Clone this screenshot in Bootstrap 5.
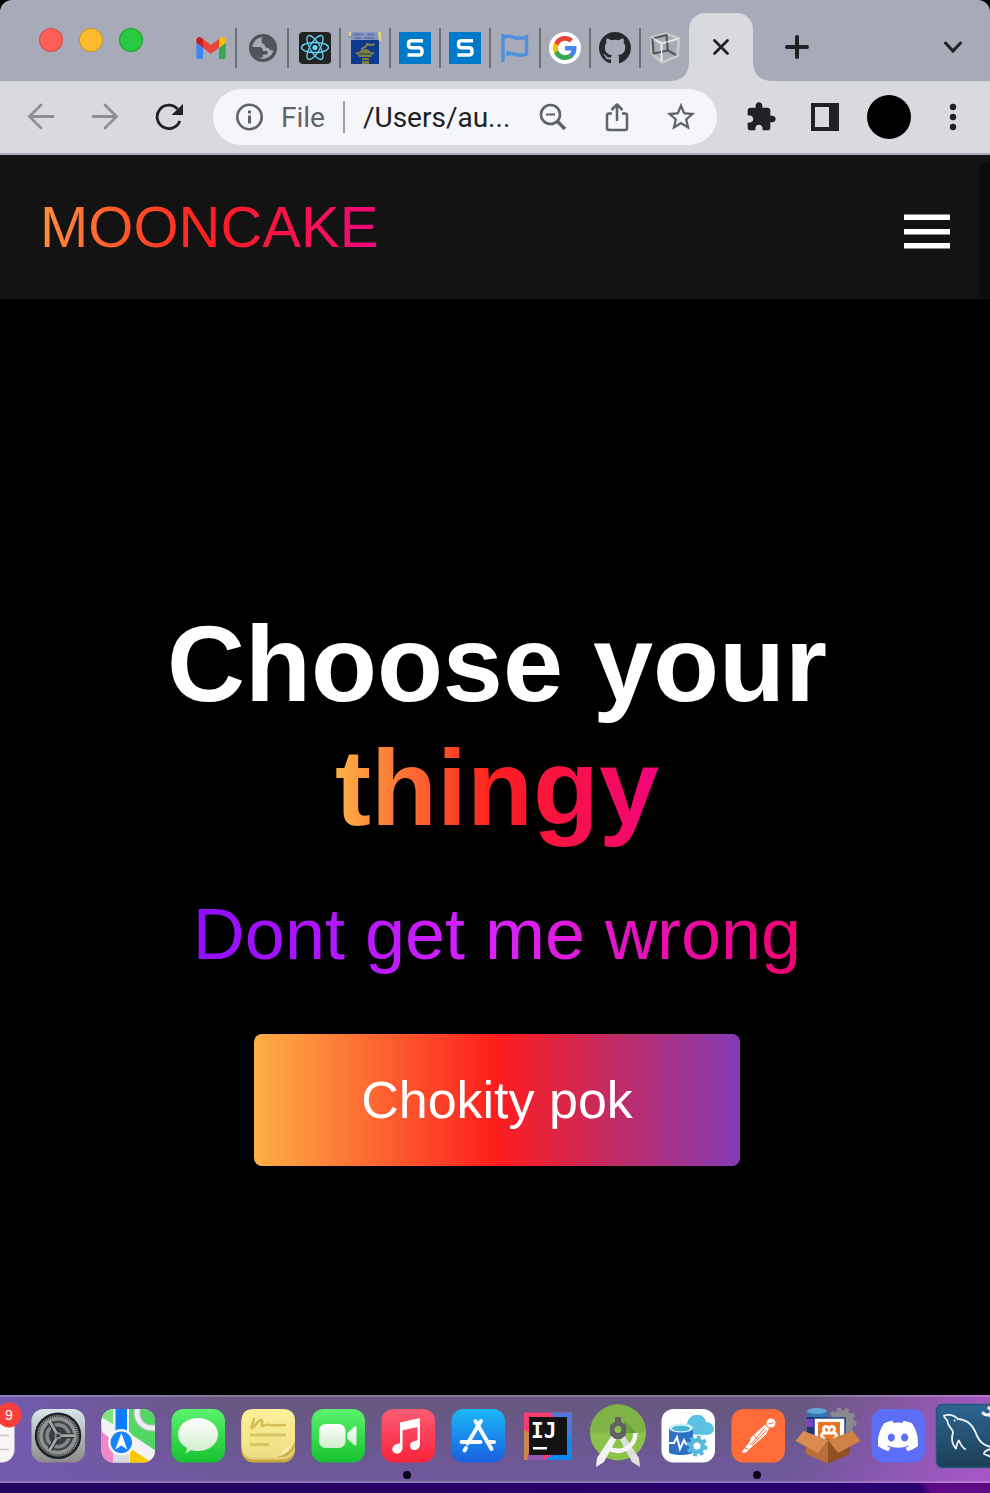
<!DOCTYPE html>
<html lang="en">
<head>
<meta charset="utf-8">
<meta name="viewport" content="width=device-width, initial-scale=1">
<title>Mooncake</title>
<link href="https://cdn.jsdelivr.net/npm/bootstrap@5.3.0/dist/css/bootstrap.min.css" rel="stylesheet">
<style>
  body { background: #000; font-family: "Liberation Sans", Arial, sans-serif; }
  button { border: 0; padding: 0; background: none; color: inherit; }
  svg { display: block; flex: none; }

  /* browser window */
  .window-top { background: #a7abb7; border-radius: 12px 12px 0 0; }
  .tabstrip { height: 81px; padding-top: 13px; }
  .lights { gap: 16px; margin: 0 44px 0 39px; height: 54px; }
  .light { width: 24px; height: 24px; border-radius: 50%; border: 1px solid #0003; }
  .light-close { background: #ff5f57; }
  .light-min { background: #febc2e; }
  .light-zoom { background: #28c840; }
  .fav { width: 50px; height: 40px; margin-top: 15px; border-right: 2px solid #6b6d75; }
  .fav-wide { width: 52px; padding-left: 2px; }
  .fav-last { width: 48px; border-right: 0; }
  .tab-active { width: 64px; background: #d9dae0; border-radius: 16px 16px 0 0; }
  .tab-active::before, .tab-active::after { content: ""; position: absolute; bottom: 0; width: 16px; height: 16px; }
  .tab-active::before { right: 100%; background: radial-gradient(circle at 0 0, #0000 15px, #d9dae0 16px); }
  .tab-active::after { left: 100%; background: radial-gradient(circle at 100% 0, #0000 15px, #d9dae0 16px); }
  .slot { width: 64px; flex: none; }
  .newtab { margin-left: 12px; }
  .toolbar { height: 74px; gap: 12px; padding: 0 5px 0 9px; background: #d9dae0; border-bottom: 2px solid #a9acb2; color: #202124; }
  .omnibox { height: 56px; padding: 0 4px 0 22px; background: #f5f6f9; border-radius: 28px; color: #5f6368; font: 28px Roboto, sans-serif; }
  .omnibox input { width: 0; padding: 0; border: 0; outline: 0; background: none; color: #202124; }
  .scheme { margin: 0 18px 0 16px; }
  .scheme-rule { width: 2px; height: 32px; margin-right: 18px; background: #a0a1a5; }
  .avatar { width: 44px; height: 44px; background: #000; }

  /* page */
  .site-nav { height: 144px; padding: 0 40px; background: #131313; }
  .nav-toggle { padding-top: 9px; }
  .scroll-thumb { right: 0; top: 8px; bottom: 1px; width: 11px; background: #0b0b0b; border-radius: 6px 0 0 6px; }
  .fire { background: linear-gradient(to right, #fcb045, #fd1d1d, #f1047c); -webkit-background-clip: text; background-clip: text; color: transparent; }
  .logo { font-size: 58px; line-height: 66px; background-image: linear-gradient(to right, #ff8f3a, #ff1d1d 50%, #f1087c); }
  .hero { padding: 74px 0 0 4px; }
  .hero h1 { margin: 0 0 43px; font-size: 108px; line-height: 124px; font-weight: 700; color: #fff; }
  .tagline { margin: 0 0 59px; font-size: 72px; line-height: 82px; color: transparent; background: linear-gradient(to right, #8f0dff, #da22ff 50%, #f2006d); -webkit-background-clip: text; background-clip: text; }
  .cta { padding: 36px 107px; font-size: 52px; line-height: 60px; color: #fff; border-radius: 8px; background: linear-gradient(to right, #fcb045, #fd1d1d 50%, #833ab4); }

  /* dock */
  .desk { padding-bottom: 10px; background: linear-gradient(54deg, #0000 87%, #5d0b84 88%), linear-gradient(to right, #21045c, #2a0272); overflow: hidden; }
  .dock { height: 88px; box-shadow: inset 0 2px #fff3, inset 0 -2px #fff3; overflow: hidden;
    background: linear-gradient(100deg, #745ab0 0, #745ab000 24%), linear-gradient(100deg, #a957c900 80%, #a957c9 100%), linear-gradient(#65587c, #70589e) #65587c; }
  .dock-row { margin-left: -47px; }
  .dock-row button { width: 70px; height: 88px; flex: none; }
</style>
</head>
<body class="d-flex flex-column min-vh-100">

<header class="window-top">
  <div class="tabstrip d-flex">
    <div class="lights d-flex align-items-center">
      <button class="light light-close" aria-label="Close window"></button>
      <button class="light light-min" aria-label="Minimise window"></button>
      <button class="light light-zoom" aria-label="Zoom window"></button>
    </div>

    <button class="fav d-flex align-items-center justify-content-center" aria-label="Gmail">
      <svg width="30" height="22" viewBox="52 42 88 66"><path fill="#4285f4" d="M58 108h14V74L52 59v43c0 3.32 2.69 6 6 6"/><path fill="#34a853" d="M120 108h14c3.32 0 6-2.69 6-6V59l-20 15"/><path fill="#fbbc04" d="M120 48v26l20-15v-8c0-7.42-8.47-11.65-14.4-7.2"/><path fill="#ea4335" d="M72 74V48l24 18 24-18v26L96 92"/><path fill="#c5221f" d="M52 51v8l20 15V48l-5.6-4.2c-5.94-4.45-14.4-.22-14.4 7.2"/></svg>
    </button>
    <button class="fav fav-wide d-flex align-items-center justify-content-center" aria-label="Web page">
      <svg width="32" height="32" viewBox="0 0 32 32"><circle cx="16" cy="16" r="12.500" fill="#a7abb7"/><path fill="#50545a" d="M18 3c-2.500 1.500-3.500 3.500-3.500 6 0 2 1 3 3 3 0 2.500 1.500 4 4 4 1 2 3 3 6.500 2V9L23 4zM3 15h9c2.500 0 4 1.500 4 4h4.500v3.500H16V25l-4 1-5-2z"/><circle cx="16" cy="16" r="12.400" fill="none" stroke="#50545a" stroke-width="3.300"/></svg>
    </button>
    <button class="fav fav-wide d-flex align-items-center justify-content-center" aria-label="React">
      <svg width="32" height="32" viewBox="0 0 32 32"><rect width="32" height="32" rx="4" fill="#222"/><circle cx="16" cy="15.500" r="2.600" fill="#61dafb"/><g fill="none" stroke="#61dafb" stroke-width="1.300"><ellipse cx="16" cy="15.500" rx="13.500" ry="5"/><ellipse cx="16" cy="15.500" rx="13.500" ry="5" transform="rotate(60 16 15.500)"/><ellipse cx="16" cy="15.500" rx="13.500" ry="5" transform="rotate(120 16 15.500)"/></g></svg>
    </button>
    <button class="fav d-flex align-items-center justify-content-center" aria-label="University">
      <svg width="32" height="32" viewBox="0 0 32 32"><path fill="#0d3a8c" d="M2 0h28v32H2z"/><path fill="#8496c0" d="M0 0h30v8H2V6H0z"/><path stroke="#5a70a8" stroke-width="1.500" d="M4 2.500h10m4 0h7M6 6h6m3 0h10"/><path fill="#e9d27a" d="M29 0h3v9h-2zM0 0h2v4H0z"/><path fill="none" stroke="#8a8a4e" stroke-width="1.800" d="M12 17c3-1 5-2 7-5m-2 0 5 1 4-1"/><path fill="#7f7d3c" d="m6 21 5-1.500c1-3.500 9-3.500 10 0l5 1.500-4 3v1H10v-1zM13 26h7v6h-7z"/><path stroke="#0d3a8c" stroke-width="1" d="M10 22h12M13 28.500h7"/></svg>
    </button>
    <button class="fav d-flex align-items-center justify-content-center" aria-label="Source page 1">
      <svg width="32" height="32" viewBox="0 0 32 32"><path fill="#0079c8" d="M0 0h32v32H0z"/><path fill="none" stroke="#fff" stroke-width="3.500" stroke-linejoin="round" d="M24 8.700H12.500q-3 0-3 3v1q0 3 3 3h7.500q3 0 3 3v1.300q0 3-3 3H8.500"/></svg>
    </button>
    <button class="fav d-flex align-items-center justify-content-center" aria-label="Source page 2">
      <svg width="32" height="32" viewBox="0 0 32 32"><path fill="#0079c8" d="M0 0h32v32H0z"/><path fill="none" stroke="#fff" stroke-width="3.500" stroke-linejoin="round" d="M24 8.700H12.500q-3 0-3 3v1q0 3 3 3h7.500q3 0 3 3v1.300q0 3-3 3H8.500"/></svg>
    </button>
    <button class="fav d-flex align-items-center justify-content-center" aria-label="Flag">
      <svg width="32" height="32" viewBox="0 0 32 32" fill="none" stroke="#4f90df" stroke-width="3.500"><path stroke-linecap="round" d="M4 3.500v25"/><path d="M4 5.500c4-2 7-1.500 11 0s8 1 12.500-.5v17c-4 2-7 1.500-10.500.5s-5-1.500-8-.5v-3"/></svg>
    </button>
    <button class="fav d-flex align-items-center justify-content-center" aria-label="Google">
      <svg width="32" height="32" viewBox="0 0 32 32"><circle cx="16" cy="16" r="16" fill="#fff"/><g transform="translate(4 4)"><path fill="#4285f4" d="M23.500 12.270c0-.8-.07-1.550-.2-2.270H12v4.500h6.470c-.28 1.480-1.130 2.730-2.400 3.580v3h3.870c2.270-2.080 3.560-5.150 3.560-8.810z"/><path fill="#34a853" d="M12 24c3.240 0 5.950-1.080 7.940-2.910l-3.870-3c-1.080.72-2.450 1.160-4.070 1.160-3.130 0-5.780-2.110-6.730-4.960H1.290v3.090C3.260 21.300 7.310 24 12 24z"/><path fill="#fbbc05" d="M5.270 14.290A7.200 7.200 0 0 1 4.890 12c0-.8.140-1.570.38-2.290V6.620H1.290a12 12 0 0 0 0 10.760z"/><path fill="#ea4335" d="M12 4.750c1.770 0 3.350.61 4.600 1.800l3.430-3.420C17.950 1.190 15.240 0 12 0 7.310 0 3.260 2.700 1.290 6.620l3.980 3.090C6.220 6.860 8.870 4.750 12 4.750z"/></g></svg>
    </button>
    <button class="fav d-flex align-items-center justify-content-center" aria-label="GitHub">
      <svg width="32" height="32" viewBox="0 0 16 16" fill="#24292e"><path d="M8 0C3.580 0 0 3.580 0 8c0 3.540 2.290 6.530 5.470 7.590.4.070.55-.17.55-.38 0-.19-.01-.82-.01-1.490-2.010.37-2.530-.49-2.690-.94-.09-.23-.48-.94-.82-1.130-.28-.15-.68-.52-.01-.53.63-.01 1.080.58 1.230.82.72 1.210 1.870.87 2.330.66.070-.52.280-.87.510-1.070-1.780-.2-3.640-.89-3.640-3.950 0-.87.310-1.590.82-2.150-.08-.2-.36-1.020.080-2.120 0 0 .67-.21 2.200.82.640-.18 1.320-.27 2-.27s1.360.09 2 .27c1.530-1.040 2.200-.82 2.200-.82.44 1.100.16 1.920.080 2.120.51.560.82 1.270.82 2.150 0 3.070-1.870 3.750-3.650 3.950.29.250.54.730.54 1.480 0 1.070-.01 1.930-.01 2.200 0 .21.150.46.550.38A8.010 8.010 0 0 0 16 8c0-4.420-3.580-8-8-8z"/></svg>
    </button>
    <button class="fav fav-last d-flex align-items-center justify-content-center" aria-label="Cube">
      <svg width="32" height="32" viewBox="0 0 32 32" fill="none" stroke-linejoin="round"><path stroke="#c9c9c7" stroke-width="2.800" d="M2.500 5.500 17 1.500 30 6.500 28.500 24 13 30.500 3 21.500zM12.500 11.500 30 6.500M12.500 11.500v18M2.500 5.500l10 6"/><path stroke="#55575a" stroke-width="2.200" d="M3.500 6.500 17.500 3l1.200 15.500L4.500 21.500zM19 18.500l8 4.500"/><path stroke="#f1f1ef" stroke-width="1.200" d="M12.500 11.500v18M2.500 5l10 6.500L29.500 6.500"/></svg>
    </button>

    <button class="tab-active position-relative d-flex align-items-center justify-content-center" aria-label="Close tab">
      <svg width="20" height="20" viewBox="0 0 20 20" fill="none" stroke="#202124" stroke-width="2.800" stroke-linecap="round"><path d="m3.500 3.500 13 13m0-13-13 13"/></svg>
    </button>
    <button class="slot newtab d-flex align-items-center justify-content-center" aria-label="New tab">
      <svg width="26" height="26" viewBox="0 0 26 26" fill="none" stroke="#202124" stroke-width="4" stroke-linecap="round"><path d="M13 3v20M3 13h20"/></svg>
    </button>
    <button class="slot ms-auto me-1 d-flex align-items-center justify-content-center" aria-label="Search tabs">
      <svg width="20" height="20" viewBox="0 0 20 20" fill="none" stroke="#202124" stroke-width="3" stroke-linecap="round"><path d="m1.500 6 7.500 8 7.500-8"/></svg>
    </button>
  </div>

  <div class="toolbar d-flex align-items-center">
    <div class="d-flex">
      <button class="slot d-flex justify-content-center" aria-label="Back">
        <svg width="28" height="28" viewBox="0 0 28 28" fill="none" stroke="#8e8f94" stroke-width="2.800" stroke-linecap="round"><path d="M26 13.500H2.500M14 2 2.500 13.500 14 25"/></svg>
      </button>
      <button class="slot d-flex justify-content-center" aria-label="Forward">
        <svg width="28" height="28" viewBox="0 0 28 28" fill="none" stroke="#8e8f94" stroke-width="2.800" stroke-linecap="round"><path d="M2 13.500h23.500M14 2l11.500 11.500L14 25"/></svg>
      </button>
      <button class="slot d-flex justify-content-center" aria-label="Reload">
        <svg width="28" height="28" viewBox="0 0 28 28"><path fill="none" stroke="#202124" stroke-width="2.800" d="M22.500 6A11.700 11.700 0 1 0 24.800 18"/><path fill="#202124" d="M28 1v11H16.500z"/></svg>
      </button>
    </div>

    <div class="omnibox flex-grow-1 d-flex align-items-center">
      <svg width="30" height="30" viewBox="0 0 30 30"><circle cx="14.500" cy="15" r="12.200" fill="none" stroke="currentColor" stroke-width="2.600"/><path fill="currentColor" d="M13 8.500h3v3h-3zm0 5h3v8h-3z"/></svg>
      <label for="address" class="scheme">File</label>
      <span class="scheme-rule"></span>
      <input id="address" class="flex-grow-1" type="text" value="/Users/au...">
      <button class="slot d-flex justify-content-center" aria-label="Zoom out">
        <svg width="28" height="28" viewBox="0 0 28 28" fill="none" stroke="currentColor" stroke-width="2.600"><circle cx="11.500" cy="11.500" r="9.500"/><path stroke-width="3.600" d="m18 18 8 8"/><path stroke-width="2" d="M7 11.500h9"/></svg>
      </button>
      <button class="slot d-flex justify-content-center" aria-label="Share">
        <svg width="30" height="30" viewBox="0 0 30 30" fill="none" stroke="currentColor" stroke-width="2.500" stroke-linejoin="round"><path d="M10 11.500H7q-2 0-2 2V26q0 2 2 2h16q2 0 2-2V13.500q0-2-2-2h-3M15 19V3M9.500 8 15 2.500 20.500 8"/></svg>
      </button>
      <button class="slot d-flex justify-content-center" aria-label="Bookmark">
        <svg width="34" height="34" viewBox="0 0 24 24" fill="currentColor"><path d="m22 9.240-7.190-.62L12 2 9.190 8.630 2 9.240l5.460 4.730L5.820 21 12 17.270 18.180 21l-1.630-7.030L22 9.240zM12 15.400l-3.760 2.270 1-4.280-3.320-2.880 4.380-.38L12 6.100l1.710 4.040 4.380.38-3.320 2.880 1 4.280L12 15.400z"/></svg>
      </button>
    </div>

    <div class="d-flex align-items-center">
      <button class="slot d-flex justify-content-center" aria-label="Extensions">
        <svg width="32" height="32" viewBox="0 0 24 24" fill="currentColor"><path d="M20.500 11H19V7c0-1.100-.9-2-2-2h-4V3.500C13 2.120 11.880 1 10.500 1S8 2.120 8 3.500V5H4c-1.100 0-1.990.9-1.990 2v3.800H3.500c1.490 0 2.700 1.210 2.700 2.700s-1.210 2.700-2.700 2.700H2V20c0 1.100.9 2 2 2h3.800v-1.500c0-1.490 1.210-2.700 2.700-2.700 1.490 0 2.700 1.210 2.700 2.700V22H17c1.100 0 2-.9 2-2v-4h1.500c1.380 0 2.500-1.120 2.500-2.500S21.880 11 20.500 11z"/></svg>
      </button>
      <button class="slot d-flex justify-content-center" aria-label="Side panel">
        <svg width="28" height="28" viewBox="0 0 28 28"><path fill="#202124" fill-rule="evenodd" d="M0 0h28v28H0zm4 4v20h14V4z"/></svg>
      </button>
      <button class="slot d-flex justify-content-center" aria-label="Profile"><span class="avatar rounded-circle"></span></button>
      <button class="slot d-flex justify-content-center" aria-label="Menu">
        <svg width="8" height="28" viewBox="0 0 8 28" fill="#202124"><circle cx="4" cy="4" r="3.200"/><circle cx="4" cy="14" r="3.200"/><circle cx="4" cy="24" r="3.200"/></svg>
      </button>
    </div>
  </div>
</header>

<nav class="site-nav position-relative d-flex align-items-center justify-content-between">
  <a href="#" class="logo fire text-decoration-none">MOONCAKE</a>
  <button class="nav-toggle text-white" aria-label="Open navigation">
    <svg width="46" height="36" viewBox="0 0 46 36" fill="currentColor"><path d="M0 .5h46V6H0zM0 15h46v5.500H0zM0 29h46v5.500H0z"/></svg>
  </button>
  <span class="scroll-thumb position-absolute"></span>
</nav>

<main class="hero flex-grow-1 d-flex flex-column align-items-center justify-content-center text-center">
  <h1>Choose your<br><span class="fire">thingy</span></h1>
  <p class="tagline">Dont get me wrong</p>
  <button class="cta">Chokity pok</button>
</main>

<footer class="desk">
  <div class="dock">
    <div class="dock-row d-flex">
      <button aria-label="Reminders, 9 due">
        <svg width="70" height="88" viewBox="0 0 70 88"><rect x="8" y="14" width="53.500" height="53.500" rx="13" fill="#f7f6f4"/><path stroke="#c9c8c6" stroke-width="1.500" d="M20 40.500h36M20 54.500h36"/><circle cx="56" cy="20" r="12.500" fill="#f9413a"/><text x="56" y="25" text-anchor="middle" font-family="Liberation Sans, sans-serif" font-size="14" fill="#fff">9</text></svg>
      </button>
      <button aria-label="System Settings">
        <svg width="70" height="88" viewBox="0 0 70 88">
          <defs><linearGradient id="gSet" x2="0" y2="1"><stop stop-color="#d8e5ea"/><stop offset="1" stop-color="#8d8b88"/></linearGradient></defs>
          <rect x="8.500" y="14" width="53.500" height="53.500" rx="12" fill="url(#gSet)"/>
          <circle cx="35" cy="40.700" r="22" fill="#9a9b9b" stroke="#202326" stroke-width="2.500"/><circle cx="35" cy="40.700" r="19.500" fill="none" stroke="#2c2f31" stroke-width="2" stroke-dasharray="1 1"/>
          <circle cx="35" cy="40.700" r="16.500" fill="#414547" stroke="#8f9191" stroke-width="3"/><circle cx="35" cy="40.700" r="11" fill="#3a3e40" stroke="#85888a" stroke-width="3.500"/>
          <path stroke="#2a2d2f" stroke-width="5" d="M35 40.700h16M35 40.700 27 27M35 40.700 27 54.500"/><path stroke="#a5a7a7" stroke-width="2.800" d="M35 40.700h17M35 40.700 26.500 26M35 40.700 26.500 55.500"/><circle cx="35" cy="40.700" r="3.500" fill="#888b8b"/><circle cx="35" cy="40.700" r="1.800" fill="#333"/>
        </svg>
      </button>
      <button aria-label="Maps">
        <svg width="70" height="88" viewBox="0 0 70 88">
          <defs><clipPath id="cMap"><rect x="8.500" y="14" width="53.500" height="53.500" rx="12"/></clipPath></defs>
          <g clip-path="url(#cMap)"><path fill="#f0f1f3" d="M8 14h55v54H8z"/><path fill="#7fe57b" d="M8 14h12v15L8 22z"/><path fill="#52d765" d="M36 14h27v42L36 38z"/><circle cx="59" cy="18" r="15" fill="none" stroke="#b9c0c2" stroke-width="7"/><circle cx="59" cy="18" r="15" fill="none" stroke="#eceef0" stroke-width="4.500"/><path fill="#ef87c4" d="M8 36l12 10v22H8z"/><path fill="#d8dae2" d="M20 46h16v22H20z"/><path fill="#fdc800" d="M37 53l23 15H37z"/><path stroke="#f3f3f5" stroke-width="9" d="M5 27l60 39"/><path fill="#0a7cff" d="M22.500 14h11.500v25H22.500z"/></g>
          <circle cx="28.300" cy="47.300" r="12" fill="#1683ff" stroke="#f4f6f8" stroke-width="2.500"/><path fill="#fff" d="m28.300 38 6 16.500-6-4-6 4z"/>
        </svg>
      </button>
      <button aria-label="Messages">
        <svg width="70" height="88" viewBox="0 0 70 88">
          <defs><linearGradient id="gGreen" x2="0" y2="1"><stop stop-color="#5cf36f"/><stop offset="1" stop-color="#16c22f"/></linearGradient><linearGradient id="gWhite" x2="0" y2="1"><stop stop-color="#fff"/><stop offset="1" stop-color="#cfeecb"/></linearGradient></defs>
          <rect x="8.500" y="14" width="53.500" height="53.500" rx="12" fill="url(#gGreen)"/><path fill="url(#gWhite)" d="M35 23c11 0 20 7 20 16.500S46 56 35 56c-2.500 0-5-.4-7-1-2 2-4 3-6 3 1.500-1.500 2.200-3 2-5.200C18.500 50 15 45 15 39.500 15 30 24 23 35 23z"/>
        </svg>
      </button>
      <button aria-label="Stickies">
        <svg width="70" height="88" viewBox="0 0 70 88">
          <defs><linearGradient id="gNote" x2="0" y2="1"><stop stop-color="#fcf099"/><stop offset="1" stop-color="#eedf84"/></linearGradient></defs>
          <rect x="8.500" y="17" width="53.500" height="50.500" rx="12" fill="#c8a941"/><rect x="8.500" y="15" width="53.500" height="49.500" rx="12" fill="#e4d078"/><path fill="url(#gNote)" d="M20.500 14h29q12.500 0 12.500 12v21c-4 10-10 15-17 15H20.500q-12 0-12-12V26q0-12 12-12z"/><path fill="#c9b04e" d="M62 45c-3 9-9 15-18 17h6c6-1 12-7 12-13z"/><path fill="#f7eeae" d="M62 44c-3 10-9 15.500-18 17.500 5-2 7-5 8-8.500 4 0 7-3 10-9z"/>
          <path fill="none" stroke="#d5bd58" stroke-width="2.500" d="M21 23c0 4-4 10-2 10s6-8 9-8-1 7 2 6 4-2 7-1 7 0 16 0"/><path stroke="#d9c464" stroke-width="3" d="M17 40h36M17 49.500h19"/>
        </svg>
      </button>
      <button aria-label="FaceTime">
        <svg width="70" height="88" viewBox="0 0 70 88"><rect x="8.500" y="14" width="53.500" height="53.500" rx="12" fill="url(#gGreen)"/><rect x="16" y="29" width="26.500" height="24" rx="6.500" fill="url(#gWhite)"/><path fill="url(#gWhite)" d="M44 38.500 51 32q2.500-2 2.500 1v16q0 3-2.500 1l-7-6.500z"/></svg>
      </button>
      <button aria-label="Music">
        <svg width="70" height="88" viewBox="0 0 70 88">
          <defs><linearGradient id="gMus" x2="0" y2="1"><stop stop-color="#fb5c74"/><stop offset="1" stop-color="#fa233b"/></linearGradient></defs>
          <rect x="8.500" y="14" width="53.500" height="53.500" rx="12" fill="url(#gMus)"/><path fill="#fff" d="m27 27.500 20-4.500v25.500c0 4-2 6.500-5.500 6.500-6 0-6-8 0-9l3-.8V32l-15 3.300V52c0 4-2 6.500-5.500 6.500-6.500 0-6-8.500 0-9.500l3-.8z"/><circle cx="34" cy="80" r="4" fill="#06021a"/>
        </svg>
      </button>
      <button aria-label="App Store">
        <svg width="70" height="88" viewBox="0 0 70 88">
          <defs><linearGradient id="gApp" x2="0" y2="1"><stop stop-color="#1bb8f8"/><stop offset="1" stop-color="#1a5fe0"/></linearGradient></defs>
          <rect x="8.500" y="14" width="53.500" height="53.500" rx="12" fill="url(#gApp)"/><g stroke="#f6faff" stroke-width="4" stroke-linecap="round"><path d="m38 26-13.500 22.500M23 53l-1.500 2.500M32.500 26l16 28M18.500 47h19M46 47h5"/></g>
        </svg>
      </button>
      <button aria-label="IntelliJ IDEA">
        <svg width="70" height="88" viewBox="0 0 70 88"><path fill="#f93d72" d="M11 17.500h47.500V65H11z"/><path fill="#4f78df" d="M37 17.500h21.500V45L50 30z"/><path fill="#0f86f2" d="M58.500 35v30H32l15-10z"/><path fill="#cf8745" d="M11 35l10 5-7 25h-3z"/><path fill="#9759ad" d="m14 65 4-15 14 8-2 7z"/><path fill="#131313" d="M16 22h38v38H16z"/><text x="18" y="43" font-family="DejaVu Sans Mono, monospace" font-weight="700" font-size="21" fill="#fff">IJ</text><path fill="#fff" d="M20 52h14v2.500H20z"/></svg>
      </button>
      <button aria-label="Android Studio">
        <svg width="70" height="88" viewBox="0 0 70 88"><circle cx="35" cy="37.500" r="28" fill="#8bc34a"/><path fill="#7eb445" d="M7 37.500a28 28 0 0 1 56 0z"/><path fill="#6d9f3f" d="m41 25 13 13H42z"/><path fill="#f1f1f1" d="m29 40 5 3-13 24-8 5 1-9z"/><path fill="#dfdfdf" d="m41 40-5 3 13 24 8 5-1-9z"/><path fill="none" stroke="#f5f5f5" stroke-width="4.500" d="M25 53c12 7 27 0 27.500-15"/><path fill="#616161" d="M32 22h6v5l5 3v10l-5 4h-6l-5-4V30l5-3z"/><circle cx="35" cy="34.500" r="3.500" fill="#8bc34a"/></svg>
      </button>
      <button aria-label="Azure Data Studio">
        <svg width="70" height="88" viewBox="0 0 70 88"><rect x="8.500" y="14" width="53.500" height="53.500" rx="12" fill="#fff"/><path fill="#5cc2e4" d="M32 39c-5-1-5-9 2-10 1-11 17-13 19-2 5 0 8 4 8 7s-3 6-8 6z"/><path fill="#2f6fc4" d="M16 33v24c0 4 24 4 24 0V33z"/><ellipse cx="28" cy="33" rx="12" ry="4.500" fill="#cfeef4"/><ellipse cx="28" cy="33.500" rx="9" ry="2.800" fill="#44b7d0"/><path fill="none" stroke="#fff" stroke-width="2" d="M16 48h5l3-6 3 12 4-9 2 4h7"/><circle cx="44" cy="51" r="9" fill="none" stroke="#54b9dc" stroke-width="3" stroke-dasharray="4 3"/><circle cx="44" cy="51" r="5.800" fill="#fff" stroke="#54b9dc" stroke-width="4.500"/></svg>
      </button>
      <button aria-label="Postman">
        <svg width="70" height="88" viewBox="0 0 70 88"><rect x="8.500" y="14" width="53.500" height="53.500" rx="12" fill="#ff6c37"/><circle cx="48" cy="28" r="4.500" fill="#fff"/><path stroke="#ff6c37" stroke-width="1.200" d="m45.500 29 5-1.500"/><path fill="#fff" d="M42 29.500l4 4-3 6-16 14-4 4h-4.500l9-12-.5-2z"/><path fill="none" stroke="#ff6c37" stroke-width="1" d="M42 33 27 50m17-15L29 50m2-10 3 4M22 53l3 1"/><circle cx="34" cy="80" r="4" fill="#06021a"/></svg>
      </button>
      <button aria-label="XAMPP">
        <svg width="70" height="88" viewBox="0 0 70 88"><circle cx="49" cy="27" r="12" fill="#8a8b8c"/><circle cx="49" cy="27" r="13" fill="none" stroke="#8a8b8c" stroke-width="3" stroke-dasharray="4 4"/><circle cx="49" cy="27" r="4" fill="#4f4a5c"/><path fill="#20366b" d="M14 16h20v26H14z"/><path fill="#7d3fd0" d="M14 24h12v8H14z"/><path fill="#2f76b5" d="M14 16h20v6H14z"/><ellipse cx="24" cy="16" rx="10" ry="3" fill="#5ea6d8"/><path fill="#fff" stroke="#23418c" stroke-width="1.500" d="M21 23h31v24H21z"/><path fill="#ee7425" d="M25 27h22v21H25z"/><path fill="none" stroke="#fff" stroke-width="3" d="M32 44c-5-1-4-6 0-6-4-6 2-9 4-4 2-5 8-2 4 4 4 0 5 5 0 6M33 38h6"/><path fill="#b96f3a" d="m13 46 22-2v24.500L13 59z"/><path fill="#8f5025" d="m35 44 22 2v13L35 68.500z"/><path fill="#d98c4f" d="m10.500 36 24.500 9-10 13L2.500 46z"/><path fill="#cf8243" d="m59.500 36-24.500 9 10 13 22.500-12z"/></svg>
      </button>
      <button aria-label="Discord">
        <svg width="70" height="88" viewBox="0 0 70 88"><rect x="8.500" y="14" width="53.500" height="53.500" rx="12" fill="#5c6ef5"/><path fill="#fff" transform="translate(15 21) scale(2.500)" d="M13.545 2.907a13.227 13.227 0 0 0-3.257-1.011.05.05 0 0 0-.052.025c-.141.25-.297.577-.406.833a12.190 12.190 0 0 0-3.658 0 8.258 8.258 0 0 0-.412-.833.051.051 0 0 0-.052-.025c-1.125.194-2.220.534-3.257 1.011a.041.041 0 0 0-.021.018C.356 6.024-.213 9.047.066 12.032c.001.014.010.028.021.037a13.276 13.276 0 0 0 3.995 2.020.05.05 0 0 0 .056-.019c.308-.42.582-.863.818-1.329a.05.05 0 0 0-.010-.059.051.051 0 0 0-.018-.011 8.875 8.875 0 0 1-1.248-.595.05.05 0 0 1-.020-.066.051.051 0 0 1 .015-.019c.084-.063.168-.129.248-.195a.05.05 0 0 1 .051-.007c2.619 1.196 5.454 1.196 8.041 0a.052.052 0 0 1 .053.007c.080.066.164.132.248.195a.051.051 0 0 1-.004.085 8.254 8.254 0 0 1-1.249.594.05.05 0 0 0-.030.030.052.052 0 0 0 .003.041c.240.465.515.909.817 1.329a.05.05 0 0 0 .056.019 13.235 13.235 0 0 0 4.001-2.020.049.049 0 0 0 .021-.037c.334-3.451-.559-6.449-2.366-9.106a.034.034 0 0 0-.020-.019Zm-8.198 7.307c-.789 0-1.438-.724-1.438-1.612 0-.889.637-1.613 1.438-1.613.807 0 1.450.73 1.438 1.613 0 .888-.637 1.612-1.438 1.612Zm5.316 0c-.788 0-1.438-.724-1.438-1.612 0-.889.637-1.613 1.438-1.613.807 0 1.451.73 1.438 1.613 0 .888-.631 1.612-1.438 1.612Z"/></svg>
      </button>
      <button aria-label="MySQL Workbench">
        <svg width="70" height="88" viewBox="0 0 70 88">
          <defs><linearGradient id="gSql" x2="0" y2="1"><stop stop-color="#2d6592"/><stop offset="1" stop-color="#1d3f56"/></linearGradient></defs>
          <rect x="3.500" y="9.500" width="64" height="63" rx="6" fill="url(#gSql)" stroke="#1c5a78" stroke-width="1.500"/><path fill="none" stroke="#eef4f8" stroke-width="1.800" stroke-linejoin="round" d="M58 52c-8-2-11-5-14-11-4-11-9-16-19-17-3-3-8-5-14-3.500 0 3 3 3 3.500 6 .5 6 5.500 7 5.500 11-2 7-1 12 3 16 1-4 1-7 3-8 2 5 4 8 7 9M58 54c-5 1-7 3-7 5l7 3"/><circle cx="21.500" cy="25.500" r="1" fill="#fff"/><path fill="none" stroke="#eef4f8" stroke-width="3" d="M54.500 12.500c5 1 5 7 0 7.500-2 0-4-1-5-3M56 19l6 8"/>
        </svg>
      </button>
    </div>
  </div>
</footer>

<script src="https://cdn.jsdelivr.net/npm/bootstrap@5.3.0/dist/js/bootstrap.bundle.min.js"></script>
</body>
</html>
